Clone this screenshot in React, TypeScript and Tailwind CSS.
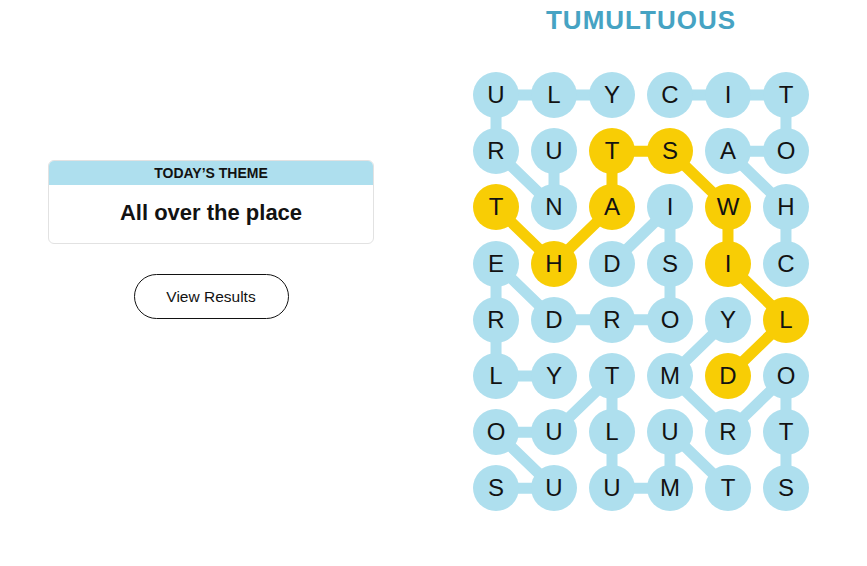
const BLUE = "#aedfee";
const YELLOW = "#f8cd05";

const LETTERS = [
  "ULYCIT",
  "RUTSAO",
  "TNAIWH",
  "EHDSIC",
  "RDROYL",
  "LYTMDO",
  "OULURT",
  "SUUMTS",
];

// found words as paths of [row, col]
const WORDS: { path: [number, number][]; spangram?: boolean }[] = [
  { path: [[1, 1], [2, 1], [1, 0], [0, 0], [0, 1], [0, 2]] },
  { path: [[3, 5], [2, 5], [1, 4], [1, 5], [0, 5], [0, 4], [0, 3]] },
  { path: [[3, 2], [2, 3], [3, 3], [4, 3], [4, 2], [4, 1], [3, 0], [4, 0], [5, 0], [5, 1]] },
  { path: [[7, 5], [6, 5], [5, 5], [6, 4], [5, 3], [4, 4]] },
  { path: [[7, 4], [6, 3], [7, 3], [7, 2], [6, 2], [5, 2], [6, 1], [6, 0], [7, 1], [7, 0]] },
  { path: [[2, 0], [3, 1], [2, 2], [1, 2], [1, 3], [2, 4], [3, 4], [4, 5], [5, 4]], spangram: true },
];

const CELL = 46;
const COL_STEP = 58;
const ROW_STEP = 56.2;

const center = (r: number, c: number) => [CELL / 2 + c * COL_STEP, CELL / 2 + r * ROW_STEP];

const spangramCells = new Set(
  WORDS.filter((w) => w.spangram).flatMap((w) => w.path.map(([r, c]) => `${r}-${c}`))
);

function Board() {
  return (
    <div className="relative">
      <svg className="absolute inset-0 w-full h-full" viewBox="0 0 336 439.4">
        {WORDS.map((w, i) => (
          <polyline
            key={i}
            points={w.path.map(([r, c]) => center(r, c).join(",")).join(" ")}
            fill="none"
            stroke={w.spangram ? YELLOW : BLUE}
            strokeWidth={11}
            strokeLinejoin="round"
          />
        ))}
      </svg>
      <div className="relative grid grid-cols-6 gap-x-[12px] gap-y-[10.2px]">
        {LETTERS.flatMap((row, r) =>
          row.split("").map((ch, c) => (
            <div
              key={`${r}-${c}`}
              className={`w-[46px] h-[46px] rounded-full flex items-center justify-center text-[24px] text-[#121212] ${
                spangramCells.has(`${r}-${c}`) ? "bg-[#f8cd05]" : "bg-[#aedfee]"
              }`}
            >
              {ch}
            </div>
          ))
        )}
      </div>
    </div>
  );
}

export default function App() {
  return (
    <div className="w-[867px] h-[566px] bg-white flex font-['Liberation_Sans',Arial,sans-serif] text-[#121212]">
      {/* left: theme + results */}
      <div className="w-[422px] flex flex-col items-center pt-[160px]">
        <div className="w-[326px] rounded-[6px] border border-[#e2e2e2] overflow-hidden">
          <div className="h-[24px] bg-[#aedfee] flex items-center justify-center text-[14px] font-bold uppercase leading-none">
            Today’s Theme
          </div>
          <div className="h-[58px] flex items-center justify-center text-[22px] font-bold leading-none pb-[2px]">
            All over the place
          </div>
        </div>
        <button className="mt-[30px] w-[155px] h-[45px] rounded-full border border-[#121212] text-[15.5px] bg-white">
          View Results
        </button>
      </div>

      {/* right: word + board */}
      <div className="ml-[51px] w-[336px] flex flex-col items-center">
        <h1 className="mt-[6px] h-[28px] text-[26px] leading-[28px] font-bold tracking-[1px] text-[#46a3c3]">
          TUMULTUOUS
        </h1>
        <div className="mt-[38px]">
          <Board />
        </div>
      </div>
    </div>
  );
}
